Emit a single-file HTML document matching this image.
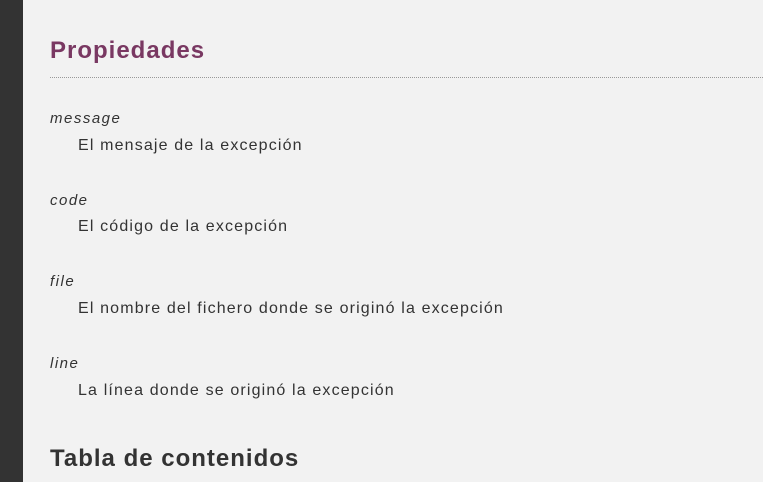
<!DOCTYPE html>
<html><head><meta charset="utf-8"><style>
html,body{margin:0;padding:0;width:763px;height:482px;overflow:hidden;background:#f2f2f2;font-family:"Liberation Sans",sans-serif;}
.side{position:absolute;left:0;top:0;width:23px;height:482px;background:#333;}
.t{position:absolute;white-space:nowrap;}
h2{position:absolute;margin:0;left:50px;font-weight:bold;font-size:24px;white-space:nowrap;}
.hr{position:absolute;left:50px;right:0;top:77px;border-top:1px dotted #999;}
.term{font-style:italic;font-size:15px;color:#333;left:50px;letter-spacing:1.5px;}
.def{font-size:16px;color:#333;left:78px;letter-spacing:1.15px;}
</style></head><body>
<div class="side"></div>
<h2 style="top:37px;color:#793862;letter-spacing:1px">Propiedades</h2>
<div class="hr"></div>
<div class="t term" style="top:110px">message</div>
<div class="t def" style="top:137px">El mensaje de la excepción</div>
<div class="t term" style="top:192px">code</div>
<div class="t def" style="top:218px">El código de la excepción</div>
<div class="t term" style="top:273px">file</div>
<div class="t def" style="top:300px">El nombre del fichero donde se originó la excepción</div>
<div class="t term" style="top:355px">line</div>
<div class="t def" style="top:382px">La línea donde se originó la excepción</div>
<h2 style="top:445px;color:#333;letter-spacing:1px">Tabla de contenidos</h2>
</body></html>
